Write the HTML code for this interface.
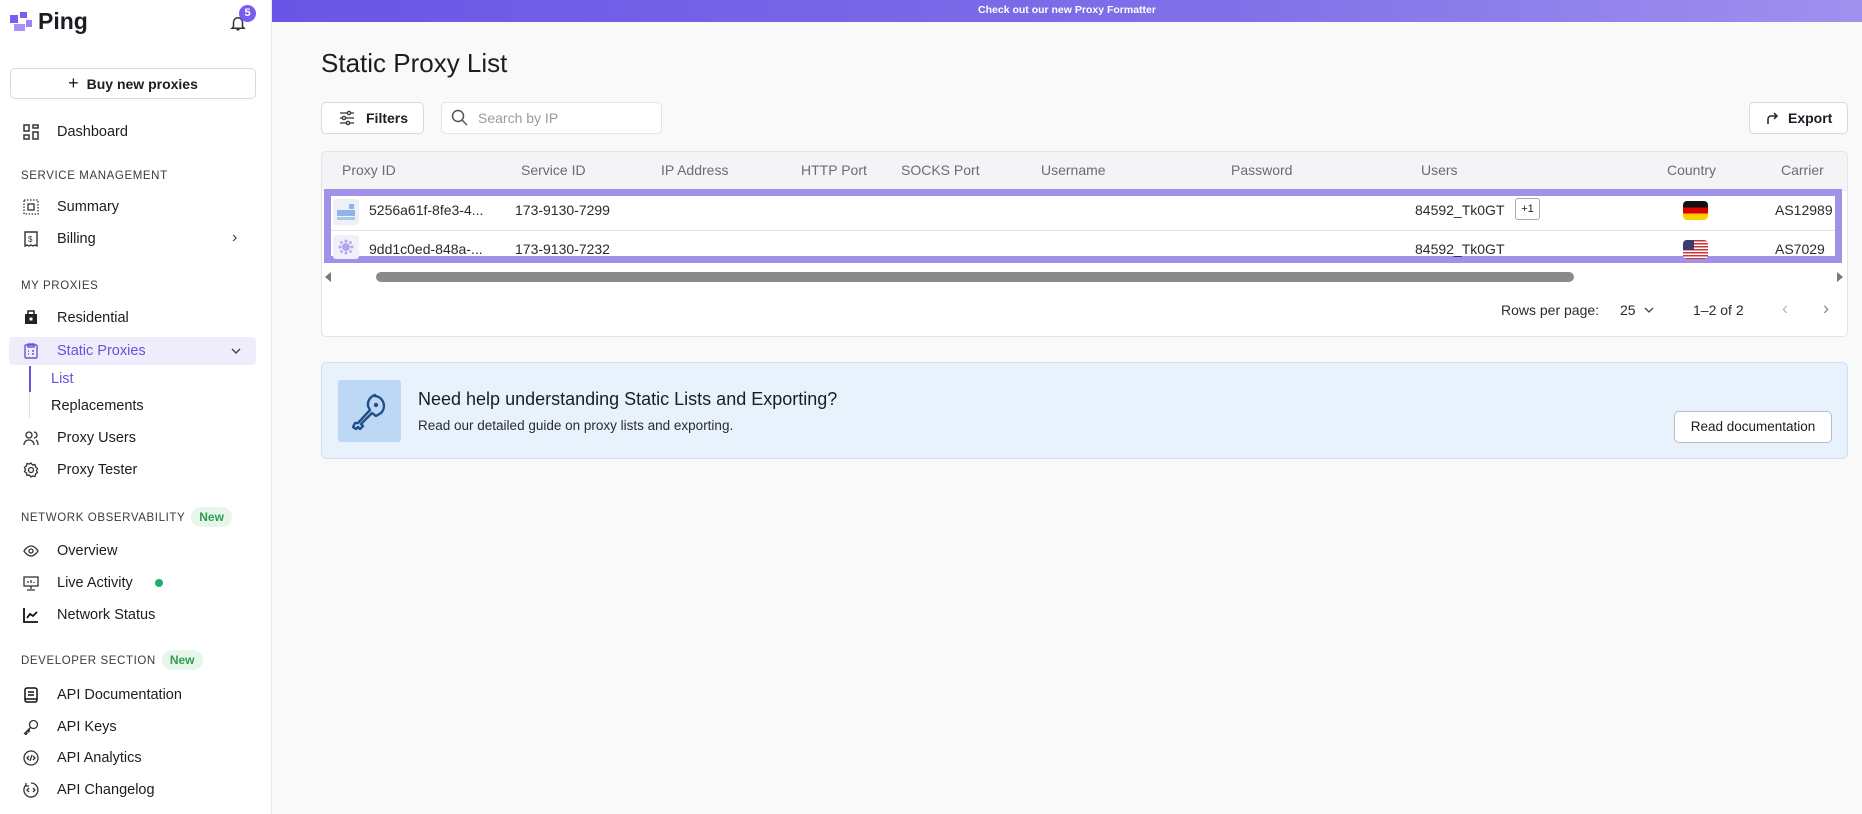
<!DOCTYPE html>
<html><head><meta charset="utf-8"><style>
*{box-sizing:border-box;margin:0;padding:0}
body{width:1862px;height:814px;overflow:hidden;font-family:"Liberation Sans",sans-serif;background:#f9f9fa;color:#1c1c24;position:relative}
.sb{position:absolute;left:0;top:0;width:272px;height:814px;background:#fff;border-right:1px solid #e8e8ec}
.a{position:absolute}
.it{position:absolute;left:57px;font-size:14.5px;color:#1c1c24;transform:translateY(-50%)}
.ic{position:absolute;left:23px;width:16px;height:16px;transform:translateY(-50%)}
.sec{position:absolute;left:21px;font-size:11.5px;letter-spacing:.6px;color:#3a3a44;transform:translateY(-50%)}
.new{display:inline-block;background:#e6f6ea;color:#2e9e4e;font-size:12px;padding:3px 8px;border-radius:10px;margin-left:6px;letter-spacing:0;font-weight:bold}
.th{position:absolute;top:170px;font-size:14px;color:#6b6b75;transform:translateY(-50%)}
.td{position:absolute;font-size:14px;color:#2a2a33;transform:translateY(-50%)}
.btn{position:absolute;background:#fff;border:1px solid #d8d8de;border-radius:5px}
</style></head><body>
<div class="sb">
 <svg class="a" style="left:10px;top:12px" width="22" height="20" viewBox="0 0 22 20"><rect x="0" y="3" width="8" height="8" fill="#7b5cf0"/><rect x="10" y="0" width="7" height="6" fill="#7b5cf0"/><rect x="4" y="12" width="11" height="7" fill="#a793f5"/><rect x="16" y="8" width="6" height="7" fill="#9b84f4"/></svg>
 <div class="a" style="left:38px;top:8px;font-size:23px;font-weight:bold;color:#1c1c24">Ping</div>
 <svg class="a" style="left:229px;top:14px" width="18" height="18" viewBox="0 0 24 24" fill="none" stroke="#333" stroke-width="2"><path d="M6 17V11a6 6 0 0 1 12 0v6l2 2H4zM10 21h4"/></svg>
 <div class="a" style="left:239px;top:5px;width:17px;height:17px;border-radius:50%;background:#7b5cf0;color:#fff;font-size:11px;text-align:center;line-height:17px;font-weight:bold">5</div>
 <div class="btn" style="left:10px;top:68px;width:246px;height:31px;font-size:14px;text-align:center;line-height:29px;font-weight:bold;color:#1c1c24"><span style="font-weight:normal;font-size:18px;margin-right:8px">+</span>Buy new proxies</div>
 <svg class="ic" style="top:132px" viewBox="0 0 16 16" fill="none" stroke="#333" stroke-width="1.5"><rect x="1" y="1" width="5" height="6"/><rect x="10" y="1" width="5" height="3"/><rect x="1" y="11" width="5" height="4"/><rect x="10" y="8" width="5" height="7"/></svg><div class="it" style="top:132px">Dashboard</div>
 <div class="sec" style="top:176px">SERVICE MANAGEMENT</div>
 <svg class="ic" style="top:207px" viewBox="0 0 16 16" fill="none" stroke="#333" stroke-width="1.3"><rect x="1" y="1" width="14" height="14" stroke-dasharray="1.5 1.5"/><rect x="5" y="5" width="6" height="6"/></svg><div class="it" style="top:207px">Summary</div>
 <svg class="ic" style="top:239px" viewBox="0 0 16 16" fill="none" stroke="#333" stroke-width="1.4"><path d="M2 1h12v14l-2-1-2 1-2-1-2 1-2-1-2 1z"/><text x="5" y="11" font-size="8" fill="#333" stroke="none">$</text></svg><div class="it" style="top:239px">Billing</div>
 <div class="a" style="left:232px;top:229px;font-size:16px;color:#444">›</div>
 <div class="sec" style="top:286px">MY PROXIES</div>
 <svg class="ic" style="top:318px" viewBox="0 0 16 16"><rect x="2" y="4" width="12" height="10" fill="#222"/><rect x="5" y="1" width="6" height="4" fill="none" stroke="#222" stroke-width="1.5"/><rect x="6.5" y="7.5" width="3" height="3" fill="#fff"/></svg><div class="it" style="top:318px">Residential</div>
 <div class="a" style="left:9px;top:337px;width:247px;height:28px;background:#efecfc;border-radius:4px"></div>
 <svg class="ic" style="top:351px" viewBox="0 0 16 16" fill="none" stroke="#6a52d8" stroke-width="1.4"><rect x="2" y="2" width="12" height="13" rx="1"/><rect x="5" y="1" width="6" height="3"/><path d="M5 8h1M9 8h2M5 11h1M9 11h2"/></svg><div class="it" style="top:351px;color:#6a52d8">Static Proxies</div>
 <svg class="a" style="left:230px;top:345px" width="12" height="12" viewBox="0 0 12 12" fill="none" stroke="#444" stroke-width="1.4"><path d="M2 4l4 4 4-4"/></svg>
 <div class="a" style="left:29px;top:366px;width:1px;height:52px;background:#ddd"></div>
 <div class="a" style="left:29px;top:366px;width:2px;height:26px;background:#6a52d8"></div>
 <div class="it" style="top:379px;left:51px;color:#6a52d8">List</div>
 <div class="it" style="top:406px;left:51px">Replacements</div>
 <svg class="ic" style="top:438px" viewBox="0 0 16 16" fill="none" stroke="#333" stroke-width="1.3"><circle cx="6" cy="5" r="3"/><path d="M1 15c0-3 2-5 5-5s5 2 5 5M11 2a3 3 0 0 1 0 6M13 10c1.5 1 2 3 2 5"/></svg><div class="it" style="top:438px">Proxy Users</div>
 <svg class="ic" style="top:470px" viewBox="0 0 16 16" fill="none" stroke="#333" stroke-width="1.3"><circle cx="8" cy="8" r="2.5"/><path d="M8 1l1.5 2 2.5-.5.5 2.5 2 1.5-1 2 1 2-2 1.5-.5 2.5-2.5-.5L8 15l-1.5-2-2.5.5-.5-2.5-2-1.5 1-2-1-2 2-1.5.5-2.5 2.5.5z"/></svg><div class="it" style="top:470px">Proxy Tester</div>
 <div class="sec" style="top:517px">NETWORK OBSERVABILITY<span class="new">New</span></div>
 <svg class="ic" style="top:551px" viewBox="0 0 16 16" fill="none" stroke="#333" stroke-width="1.3"><path d="M1 8s3-5 7-5 7 5 7 5-3 5-7 5-7-5-7-5z"/><circle cx="8" cy="8" r="2"/></svg><div class="it" style="top:551px">Overview</div>
 <svg class="ic" style="top:583px" viewBox="0 0 16 16" fill="none" stroke="#333" stroke-width="1.3"><rect x="1" y="2" width="14" height="9"/><path d="M8 11v3M4 15h8M5 8V6M8 8V5M11 8V7"/></svg><div class="it" style="top:583px">Live Activity</div>
 <div class="a" style="left:155px;top:579px;width:8px;height:8px;border-radius:50%;background:#1fae6b"></div>
 <svg class="ic" style="top:615px" viewBox="0 0 16 16" fill="none" stroke="#111" stroke-width="1.8"><path d="M1 1v14h14M4 11l3-4 3 2 4-4"/></svg><div class="it" style="top:615px">Network Status</div>
 <div class="sec" style="top:660px">DEVELOPER SECTION<span class="new">New</span></div>
 <svg class="ic" style="top:695px" viewBox="0 0 16 16" fill="none" stroke="#111" stroke-width="1.5"><rect x="2" y="1" width="12" height="14" rx="2"/><path d="M5 5h6M5 8h6M2 12h12"/></svg><div class="it" style="top:695px">API Documentation</div>
 <svg class="ic" style="top:727px" viewBox="0 0 16 16" fill="none" stroke="#333" stroke-width="1.3"><circle cx="10.5" cy="5.5" r="4"/><path d="M7.5 8.5L1.5 14.5l1.5 1 1-1-1-1 1.5-1.5 1 1 1-1-1-1 1.5-1.5"/></svg><div class="it" style="top:727px">API Keys</div>
 <svg class="ic" style="top:758px" viewBox="0 0 16 16" fill="none" stroke="#333" stroke-width="1.3"><circle cx="8" cy="8" r="7"/><path d="M6 6l-2 2 2 2M10 6l2 2-2 2M9 5l-2 6"/></svg><div class="it" style="top:758px">API Analytics</div>
 <svg class="ic" style="top:790px" viewBox="0 0 16 16" fill="none" stroke="#333" stroke-width="1.3"><path d="M3 3a7 7 0 1 0 5-2M3 1v3h3"/><path d="M6 6l-2 2 2 2M10 6l2 2-2 2"/></svg><div class="it" style="top:790px">API Changelog</div>
</div>

<div class="a" style="left:272px;top:0;width:1590px;height:22px;background:linear-gradient(90deg,#6a55e6,#8070e8 60%,#a090ee);color:#fff;font-size:10.5px;font-weight:bold;text-align:center;line-height:20px">Check out our new Proxy Formatter</div>

<div class="a" style="left:321px;top:48px;font-size:26px;color:#1c1c24">Static Proxy List</div>

<div class="btn" style="left:321px;top:102px;width:103px;height:32px;font-size:14px;line-height:30px;padding-left:44px;font-weight:bold">Filters</div>
<svg class="a" style="left:339px;top:110px" width="16" height="16" viewBox="0 0 16 16" fill="none" stroke="#333" stroke-width="1.3"><path d="M1 3h14M1 8h14M1 13h14"/><circle cx="10" cy="3" r="1.6" fill="#fff"/><circle cx="5" cy="8" r="1.6" fill="#fff"/><circle cx="9" cy="13" r="1.6" fill="#fff"/></svg>
<div class="btn" style="left:441px;top:102px;width:221px;height:32px;border-color:#e4e4e8;font-size:14px;line-height:30px;padding-left:36px;color:#9a9aa4">Search by IP</div>
<svg class="a" style="left:451px;top:109px" width="17" height="17" viewBox="0 0 17 17" fill="none" stroke="#555" stroke-width="1.5"><circle cx="7" cy="7" r="5.5"/><path d="M11 11l5 5"/></svg>
<div class="btn" style="left:1749px;top:102px;width:99px;height:32px;font-size:14px;line-height:30px;padding-left:38px;font-weight:bold">Export</div>
<svg class="a" style="left:1765px;top:111px" width="14" height="14" viewBox="0 0 14 14" fill="none" stroke="#222" stroke-width="1.5"><path d="M3 13V8a3 3 0 0 1 3-3h6M9 2l3 3-3 3"/></svg>

<div class="a" style="left:321px;top:151px;width:1527px;height:186px;background:#fff;border:1px solid #e4e4e8;border-radius:5px;overflow:hidden">
 <div class="a" style="left:0;top:0;width:1527px;height:39px;background:#f4f4f6"></div>
</div>
<div class="th" style="left:342px">Proxy ID</div><div class="th" style="left:521px">Service ID</div><div class="th" style="left:661px">IP Address</div><div class="th" style="left:801px">HTTP Port</div><div class="th" style="left:901px">SOCKS Port</div><div class="th" style="left:1041px">Username</div><div class="th" style="left:1231px">Password</div><div class="th" style="left:1421px">Users</div><div class="th" style="left:1667px">Country</div><div class="th" style="left:1781px">Carrier</div>

<div class="a" style="left:324px;top:189px;width:1518px;height:74px;border:7px solid #a291e8;background:#fff"></div>
<div class="a" style="left:331px;top:230px;width:1504px;height:1px;background:#e4e4e8"></div>
<div class="a" style="left:333px;top:199px;width:26px;height:26px;background:#eef0f6;border-radius:3px"></div>
<div class="a" style="left:337px;top:210px;width:18px;height:6px;background:#8fb4e6"></div><div class="a" style="left:337px;top:217px;width:18px;height:3px;background:#a8c6ee"></div><div class="a" style="left:349px;top:204px;width:5px;height:5px;background:#8fb4e6"></div>
<div class="a" style="left:333px;top:235px;width:26px;height:24px;background:#f2f0fa;border-radius:3px"></div>
<svg class="a" style="left:338px;top:239px" width="16" height="16" viewBox="0 0 16 16" fill="#b3a6ee"><circle cx="8" cy="8" r="4"/><circle cx="8" cy="2" r="1.5"/><circle cx="8" cy="14" r="1.5"/><circle cx="2" cy="8" r="1.5"/><circle cx="14" cy="8" r="1.5"/><circle cx="3.5" cy="3.5" r="1.4"/><circle cx="12.5" cy="12.5" r="1.4"/><circle cx="12.5" cy="3.5" r="1.4"/><circle cx="3.5" cy="12.5" r="1.4"/></svg>
<div class="td" style="left:369px;top:210px">5256a61f-8fe3-4...</div><div class="td" style="left:515px;top:210px">173-9130-7299</div>
<div class="td" style="left:369px;top:249px">9dd1c0ed-848a-...</div><div class="td" style="left:515px;top:249px">173-9130-7232</div>
<div class="td" style="left:1415px;top:210px">84592_Tk0GT</div>
<div class="a" style="left:1515px;top:198px;width:25px;height:22px;border:1px solid #aaa;border-radius:3px;font-size:11px;text-align:center;line-height:20px">+1</div>
<div class="td" style="left:1415px;top:249px">84592_Tk0GT</div>
<div class="a" style="left:1683px;top:201px;width:25px;height:19px;border-radius:4px;overflow:hidden;background:linear-gradient(#111 0 33%,#dd0000 33% 66%,#ffce00 66%)"></div>
<div class="a" style="left:1683px;top:240px;width:25px;height:19px;border-radius:4px;overflow:hidden;background:repeating-linear-gradient(#c33 0 1.5px,#fff 1.5px 3px)"><div style="width:11px;height:10px;background:#3c3b6e"></div></div>
<div class="td" style="left:1775px;top:210px">AS12989</div><div class="td" style="left:1775px;top:249px">AS7029</div>

<div class="a" style="left:325px;top:272px;width:0;height:0;border-top:5px solid transparent;border-bottom:5px solid transparent;border-right:6px solid #777"></div>
<div class="a" style="left:376px;top:272px;width:1198px;height:10px;border-radius:5px;background:#8a8a8a"></div>
<div class="a" style="left:1837px;top:272px;width:0;height:0;border-top:5px solid transparent;border-bottom:5px solid transparent;border-left:6px solid #777"></div>

<div class="td" style="left:1501px;top:310px">Rows per page:</div>
<div class="td" style="left:1620px;top:310px">25</div>
<svg class="a" style="left:1643px;top:304px" width="12" height="12" viewBox="0 0 12 12" fill="none" stroke="#444" stroke-width="1.3"><path d="M2 4l4 4 4-4"/></svg>
<div class="td" style="left:1693px;top:310px">1–2 of 2</div>
<div class="td" style="left:1782px;top:309px;color:#bbb;font-size:18px">‹</div>
<div class="td" style="left:1823px;top:309px;color:#888;font-size:18px">›</div>

<div class="a" style="left:321px;top:362px;width:1527px;height:97px;background:#e8f2fc;border:1px solid #cfe0f2;border-radius:6px"></div>
<div class="a" style="left:338px;top:380px;width:63px;height:62px;background:#bdd8f4;border-radius:3px"></div>
<svg class="a" style="left:349px;top:392px" width="40" height="40" viewBox="0 0 40 40" fill="none" stroke="#1f4f86" stroke-width="2.4" stroke-linejoin="round"><path d="M26 4a10 10 0 0 1 6 17l-5 3-4-3L12 32l2 2-3 3-2-2-2 2-3-2 2-4 3 0 12-13-2-4a10 10 0 0 1 7-11z"/><circle cx="27" cy="13" r="1" fill="#1f4f86"/></svg>
<div class="a" style="left:418px;top:389px;font-size:18px;color:#1c1c24">Need help understanding Static Lists and Exporting?</div>
<div class="a" style="left:418px;top:418px;font-size:13.5px;color:#2a2a33">Read our detailed guide on proxy lists and exporting.</div>
<div class="btn" style="left:1674px;top:411px;width:158px;height:32px;border-color:#b8bcc6;font-size:13.5px;text-align:center;line-height:30px">Read documentation</div>
</body></html>
